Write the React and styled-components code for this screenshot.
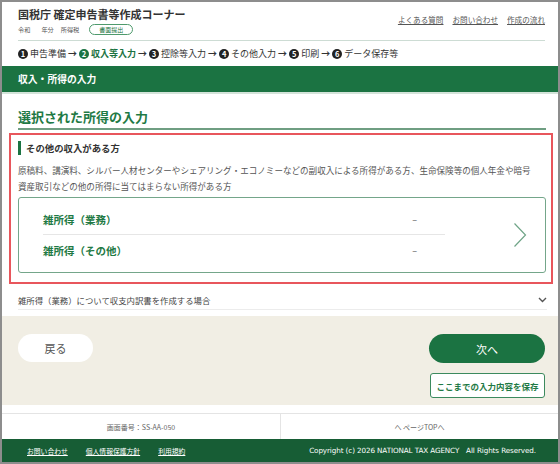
import React from 'react';
import styled, { createGlobalStyle } from 'styled-components';

const GlobalStyle = createGlobalStyle`
  html, body {
    margin: 0;
    padding: 0;
    background: #fff;
  }
  body {
    font-family: "Noto Sans CJK JP", "Noto Sans", sans-serif;
    color: #333;
  }
`;

const Frame = styled.div`
  width: 560px;
  height: 464px;
  box-sizing: border-box;
  border: 2px solid #8d8d8d;
  display: flex;
  flex-direction: column;
  overflow: hidden;
  background: #fff;
`;

const Header = styled.header`
  display: flex;
  justify-content: space-between;
  padding: 6px 13px 0 16px;
  height: 38px;
  box-sizing: border-box;
`;

const Brand = styled.div`
  display: flex;
  flex-direction: column;
  gap: 3px;
`;

const Title = styled.h1`
  margin: 0;
  font-size: 11px;
  font-weight: 700;
  line-height: 13px;
  color: #333;
`;

const SubLine = styled.div`
  display: flex;
  align-items: center;
  font-size: 6.2px;
  color: #555;
`;

const SubItem = styled.span`
  margin-right: ${p => p.$gap}px;
`;

const Pill = styled.span`
  border: 1px solid #4e9a6c;
  border-radius: 8px;
  padding: 0 9px;
  line-height: 9px;
  color: #1b7342;
  font-size: 6px;
`;

const TopLinks = styled.nav`
  display: flex;
  gap: 9px;
  padding-top: 7px;
`;

const TopLink = styled.a`
  font-size: 7.6px;
  color: #555;
  text-decoration: underline;
  line-height: 10px;
`;

const Steps = styled.div`
  margin: 0 13px 0 16px;
  border-top: 1px solid #cddcd4;
  height: 25px;
  display: flex;
  align-items: center;
  font-size: 9px;
  color: #333;
`;

const Step = styled.span`
  display: inline-flex;
  align-items: center;
  gap: 2px;
  color: ${p => (p.$active ? '#1b7342' : '#333')};
  font-weight: ${p => (p.$active ? 700 : 400)};
`;

const Num = styled.span`
  width: 10px;
  height: 10px;
  border-radius: 50%;
  background: ${p => (p.$active ? '#1b7342' : '#222')};
  color: #fff;
  font-size: 7.5px;
  font-weight: 700;
  display: inline-flex;
  align-items: center;
  justify-content: center;
  line-height: 1;
`;

const Arrow = styled.span`
  margin: 0 2px;
  font-weight: 700;
  font-size: 9px;
`;

const Band = styled.div`
  background: #1b7342;
  color: #fff;
  font-size: 9.8px;
  font-weight: 700;
  height: 26px;
  display: flex;
  align-items: center;
  padding-left: 16px;
  border-bottom: 2px solid #d3e3d9;
`;

const Main = styled.main`
  padding: 0 5px 0 7px;
`;

const SectionTitle = styled.h2`
  margin: 14px 7px 0 9px;
  font-size: 13px;
  font-weight: 700;
  color: #1f7a45;
  line-height: 18px;
  padding-bottom: 2px;
  border-bottom: 2px solid #6f9e82;
`;

const Highlight = styled.section`
  margin-top: 3px;
  border: 2px solid #e8565c;
  padding: 6px 5px 9px 7px;
`;

const Subhead = styled.h3`
  margin: 0;
  font-size: 9.4px;
  font-weight: 700;
  color: #333;
  display: flex;
  align-items: center;
  gap: 5px;
  line-height: 14px;
  &::before {
    content: '';
    width: 3px;
    height: 14px;
    background: #1b7342;
  }
`;

const Desc = styled.p`
  margin: 7px 0 3px;
  font-size: 8.55px;
  line-height: 16px;
  color: #555;
  white-space: nowrap;
`;

const IncomeCard = styled.div`
  border: 1px solid #74a68a;
  border-radius: 3px;
  display: flex;
  align-items: center;
  padding: 6px 0 7px 24px;
`;

const IncomeList = styled.div`
  width: 402px;
`;

const IncomeRow = styled.div`
  display: flex;
  justify-content: space-between;
  align-items: center;
  height: 30px;
  padding-right: 28px;
  & + & {
    border-top: 1px solid #e6e6e6;
  }
`;

const IncomeName = styled.span`
  font-size: 10.5px;
  font-weight: 700;
  color: #1f7a45;
`;

const Dash = styled.span`
  font-size: 9px;
  color: #555;
`;

const Chevron = styled.svg`
  margin-left: 68px;
`;

const Accordion = styled.div`
  margin: 6px 6px 0 9px;
  height: 19px;
  border-bottom: 1px solid #ececec;
  display: flex;
  align-items: center;
  justify-content: space-between;
  font-size: 8.4px;
  color: #444;
`;

const ActionArea = styled.div`
  margin-top: 6px;
  background: #f1eee4;
  height: 89px;
  padding: 18px 13px 0 16px;
  box-sizing: border-box;
  display: flex;
  justify-content: space-between;
  align-items: flex-start;
`;

const BackButton = styled.button`
  width: 75px;
  height: 28px;
  border: none;
  border-radius: 14px;
  background: #fff;
  color: #555;
  font-family: inherit;
  font-size: 11px;
`;

const RightActions = styled.div`
  display: flex;
  flex-direction: column;
  align-items: flex-end;
  gap: 10px;
`;

const NextButton = styled.button`
  width: 116px;
  height: 29px;
  border: none;
  border-radius: 15px;
  background: #1b7342;
  color: #fff;
  font-family: inherit;
  font-size: 11px;
`;

const SaveButton = styled.button`
  width: 115px;
  height: 25px;
  border: 1px solid #3c8a5e;
  border-radius: 3px;
  background: #fff;
  color: #1f7a45;
  font-family: inherit;
  font-size: 8.5px;
  font-weight: 700;
  padding: 0;
`;

const InfoBar = styled.div`
  margin-top: 8px;
  border-top: 1px solid #e4e4e4;
  height: 25px;
  display: grid;
  grid-template-columns: 1fr 1fr;
  font-size: 7px;
  color: #666;
`;

const InfoCell = styled.div`
  display: flex;
  align-items: center;
  justify-content: center;
  & + & {
    border-left: 1px solid #e4e4e4;
  }
`;

const Footer = styled.footer`
  flex: 1;
  background: #175d35;
  display: flex;
  align-items: center;
  justify-content: space-between;
  padding: 0 22px 0 25px;
`;

const FooterLinks = styled.div`
  display: flex;
  gap: 18px;
`;

const FooterLink = styled.a`
  color: #fff;
  font-size: 6.8px;
  text-decoration: underline;
`;

const Copy = styled.span`
  color: #fff;
  font-size: 7.2px;
  font-family: "DejaVu Sans", sans-serif;
  letter-spacing: -0.1px;
`;

const steps = ['申告準備', '収入等入力', '控除等入力', 'その他入力', '印刷', 'データ保存等'];

export default function App() {
  return (
    <>
      <GlobalStyle />
      <Frame>
        <Header>
          <Brand>
            <Title>国税庁 確定申告書等作成コーナー</Title>
            <SubLine>
              <SubItem $gap={11}>令和</SubItem>
              <SubItem $gap={7}>年分</SubItem>
              <SubItem $gap={10}>所得税</SubItem>
              <Pill>書面提出</Pill>
            </SubLine>
          </Brand>
          <TopLinks>
            <TopLink>よくある質問</TopLink>
            <TopLink>お問い合わせ</TopLink>
            <TopLink>作成の流れ</TopLink>
          </TopLinks>
        </Header>
        <Steps>
          {steps.map((s, i) => (
            <React.Fragment key={s}>
              {i > 0 && <Arrow>→</Arrow>}
              <Step $active={i === 1}>
                <Num $active={i === 1}>{i + 1}</Num>
                {s}
              </Step>
            </React.Fragment>
          ))}
        </Steps>
        <Band>収入・所得の入力</Band>
        <Main>
          <SectionTitle>選択された所得の入力</SectionTitle>
          <Highlight>
            <Subhead>その他の収入がある方</Subhead>
            <Desc>
              原稿料、講演料、シルバー人材センターやシェアリング・エコノミーなどの副収入による所得がある方、生命保険等の個人年金や暗号
              <br />
              資産取引などの他の所得に当てはまらない所得がある方
            </Desc>
            <IncomeCard>
              <IncomeList>
                <IncomeRow>
                  <IncomeName>雑所得（業務）</IncomeName>
                  <Dash>–</Dash>
                </IncomeRow>
                <IncomeRow>
                  <IncomeName>雑所得（その他）</IncomeName>
                  <Dash>–</Dash>
                </IncomeRow>
              </IncomeList>
              <Chevron width="14" height="26" viewBox="0 0 14 26">
                <path d="M1.5 1.5 L12.5 13 L1.5 24.5" fill="none" stroke="#6fa487" strokeWidth="1.2" />
              </Chevron>
            </IncomeCard>
          </Highlight>
          <Accordion>
            <span>雑所得（業務）について収支内訳書を作成する場合</span>
            <svg width="9" height="6" viewBox="0 0 9 6">
              <path d="M1 1 L4.5 4.5 L8 1" fill="none" stroke="#555" strokeWidth="1.4" />
            </svg>
          </Accordion>
        </Main>
        <ActionArea>
          <BackButton>戻る</BackButton>
          <RightActions>
            <NextButton>次へ</NextButton>
            <SaveButton>ここまでの入力内容を保存</SaveButton>
          </RightActions>
        </ActionArea>
        <InfoBar>
          <InfoCell>画面番号：SS-AA-050</InfoCell>
          <InfoCell>へ ページTOPへ</InfoCell>
        </InfoBar>
        <Footer>
          <FooterLinks>
            <FooterLink>お問い合わせ</FooterLink>
            <FooterLink>個人情報保護方針</FooterLink>
            <FooterLink>利用規約</FooterLink>
          </FooterLinks>
          <Copy>Copyright (c) 2026 NATIONAL TAX AGENCY　All Rights Reserved.</Copy>
        </Footer>
      </Frame>
    </>
  );
}
